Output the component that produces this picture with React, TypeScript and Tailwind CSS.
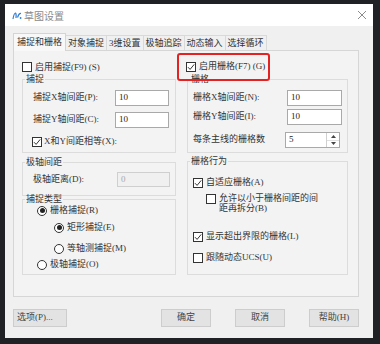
import React from 'react';

const Check = ({ checked = false }: { checked?: boolean }) => (
  <span className="w-[10px] h-[10px] border border-[#333] bg-white flex items-center justify-center shrink-0">
    {checked && (
      <svg width="8" height="8" viewBox="0 0 8 8">
        <path d="M1 4.2 L3.1 6.4 L7.2 1.4" stroke="#333" strokeWidth="1" fill="none" />
      </svg>
    )}
  </span>
);

const Radio = ({ on = false }: { on?: boolean }) => (
  <span className="w-[10px] h-[10px] rounded-full border border-[#333] bg-white flex items-center justify-center shrink-0">
    {on && <span className="w-[5px] h-[5px] rounded-full bg-[#222]" />}
  </span>
);

const Field = ({ value, w = 'w-[54px]', disabled = false }: { value: string; w?: string; disabled?: boolean }) => (
  <div
    className={
      disabled
        ? `${w} h-[15px] ml-auto bg-[#f0f0f0] border border-[#cfcfcf] text-[#a8a8a8] pl-[3px] flex items-center text-[9px]`
        : `${w} h-[16px] ml-auto bg-white border border-[#a9a9a9] text-[#222] pl-[3px] flex items-center text-[9px]`
    }
  >
    {value}
  </div>
);

const Legend = ({ children }: { children: React.ReactNode }) => (
  <legend className="ml-[2px] px-[1px] leading-[11px] text-[9px] text-[#333]">{children}</legend>
);

const tabs = ['对象捕捉', '3维设置', '极轴追踪', '动态输入', '选择循环'];

export default function App() {
  return (
    <div className="w-[380px] h-[344px] bg-[#1f2124] pt-[4px] pl-[5px] font-['Liberation_Serif','Noto_Sans_CJK_SC',serif] text-[9px] text-[#333]">
      <div className="w-[368px] h-[334px] bg-[#f0f0f0] flex flex-col">
        {/* title bar */}
        <div className="h-[22px] bg-white flex items-center pl-[7px] pr-[6px]">
          <svg width="10" height="10" viewBox="0 0 10 10">
            <path d="M1 9 Q2 3 3.5 3 Q4.5 4 4 8" stroke="#2f7fd8" strokeWidth="1.2" fill="none" />
            <path d="M5.5 7.5 Q7 3 9 3.5" stroke="#2f7fd8" strokeWidth="1.2" fill="none" />
            <circle cx="8.6" cy="8" r="0.9" fill="#2f7fd8" />
          </svg>
          <span className="ml-[2px] text-[10px] text-[#8a8a8a] font-['Noto_Sans_CJK_SC',sans-serif]">草图设置</span>
          <svg className="ml-auto" width="10" height="10" viewBox="0 0 10 10">
            <path d="M1 1 L9 9 M9 1 L1 9" stroke="#8c8c8c" strokeWidth="1" />
          </svg>
        </div>

        <div className="pl-[8px] pt-[7px]">
          {/* tabs */}
          <div className="flex items-end h-[17px]">
            <div className="relative z-10 h-[18px] mb-[-1px] pl-[3px] pr-[3px] bg-[#f8f8f8] border border-b-0 border-[#d4d4d4] flex items-center leading-[11px]">
              捕捉和栅格
            </div>
            {tabs.map((t) => (
              <div key={t} className="h-[15px] px-[2px] border border-l-0 border-b-0 border-[#d9d9d9] bg-[#f0f0f0] flex items-center leading-[11px]">
                {t}
              </div>
            ))}
          </div>

          {/* panel */}
          <div className="w-[346px] h-[247px] border border-[#d6d6d6] bg-[#f3f3f3] flex pl-[8px]">
            {/* left column */}
            <div className="w-[154px] flex flex-col">
              <div className="mt-[10px] h-[12px] flex items-center gap-[3px]">
                <Check />
                <span className="leading-[11px]">启用捕捉(F9) (S)</span>
              </div>
              <fieldset className="mt-[1px] border border-[#dcdcdc] pb-[4px]">
                <Legend>捕捉</Legend>
                <div className="mt-[5px] h-[16px] flex items-center pl-[10px] pr-[6px]">
                  <span>捕捉X轴间距(P):</span>
                  <Field value="10" />
                </div>
                <div className="mt-[6px] h-[16px] flex items-center pl-[10px] pr-[6px]">
                  <span>捕捉Y轴间距(C):</span>
                  <Field value="10" />
                </div>
                <div className="mt-[8px] h-[12px] flex items-center pl-[9px] gap-[2px]">
                  <Check checked />
                  <span>X和Y间距相等(X):</span>
                </div>
              </fieldset>
              <fieldset className="mt-[4px] border border-[#dcdcdc] pb-[8px]">
                <Legend>极轴间距</Legend>
                <div className="mt-[4px] h-[15px] flex items-center pl-[10px] pr-[5px]">
                  <span>极轴距离(D):</span>
                  <Field value="0" w="w-[53px]" disabled />
                </div>
              </fieldset>
              <fieldset className="mt-[-2px] border border-[#dcdcdc] pb-[4px]">
                <Legend>捕捉类型</Legend>
                <div className="h-[11px] flex items-center pl-[14px] gap-[3px]">
                  <Radio on />
                  <span>栅格捕捉(R)</span>
                </div>
                <div className="mt-[6px] h-[11px] flex items-center pl-[31px] gap-[3px]">
                  <Radio on />
                  <span>矩形捕捉(E)</span>
                </div>
                <div className="mt-[10px] h-[11px] flex items-center pl-[31px] gap-[3px]">
                  <Radio />
                  <span>等轴测捕捉(M)</span>
                </div>
                <div className="mt-[5px] h-[11px] flex items-center pl-[14px] gap-[3px]">
                  <Radio />
                  <span>极轴捕捉(O)</span>
                </div>
              </fieldset>
            </div>

            {/* right column */}
            <div className="relative w-[161px] ml-[11px] flex flex-col">
              <div className="absolute left-[-10px] top-[2px] w-[93px] h-[28px] border-2 border-[#e52222] rounded-[3px]" />
              <div className="mt-[10px] ml-[-1px] h-[12px] flex items-center gap-[3px]">
                <Check checked />
                <span>启用栅格(F7) (G)</span>
              </div>
              <fieldset className="mt-[1px] border border-[#dcdcdc] pb-[4px]">
                <Legend>栅格</Legend>
                <div className="mt-[5px] h-[16px] flex items-center pl-[5px] pr-[5px]">
                  <span>栅格X轴间距(N):</span>
                  <Field value="10" w="w-[55px]" />
                </div>
                <div className="mt-[3px] h-[16px] flex items-center pl-[5px] pr-[5px]">
                  <span>栅格Y轴间距(I):</span>
                  <Field value="10" w="w-[55px]" />
                </div>
                <div className="mt-[7px] h-[16px] flex items-center pl-[5px] pr-[7px]">
                  <span>每条主线的栅格数</span>
                  <div className="ml-auto w-[55px] h-[16px] bg-white border border-[#a9a9a9] flex">
                    <span className="flex-1 pl-[3px] flex items-center text-[#222]">5</span>
                    <div className="w-[13px] border-l border-[#d0d0d0] flex flex-col">
                      <div className="flex-1 flex items-center justify-center">
                        <svg width="5" height="3" viewBox="0 0 5 3"><path d="M0 3 L2.5 0 L5 3Z" fill="#444" /></svg>
                      </div>
                      <div className="flex-1 flex items-center justify-center border-t border-[#e0e0e0]">
                        <svg width="5" height="3" viewBox="0 0 5 3"><path d="M0 0 L2.5 3 L5 0Z" fill="#444" /></svg>
                      </div>
                    </div>
                  </div>
                </div>
              </fieldset>
              <fieldset className="mt-[3px] border border-[#dcdcdc] pb-[10px]">
                <Legend>栅格行为</Legend>
                <div className="mt-[10px] h-[12px] flex items-center pl-[5px] gap-[3px]">
                  <Check checked />
                  <span>自适应栅格(A)</span>
                </div>
                <div className="mt-[4px] flex items-start pl-[18px] gap-[3px]">
                  <span className="mt-[1px]"><Check /></span>
                  <span className="leading-[10px]">
                    允许以小于栅格间距的间
                    <br />
                    距再拆分(B)
                  </span>
                </div>
                <div className="mt-[18px] h-[12px] flex items-center pl-[5px] gap-[3px]">
                  <Check checked />
                  <span>显示超出界限的栅格(L)</span>
                </div>
                <div className="mt-[9px] h-[12px] flex items-center pl-[5px] gap-[3px]">
                  <Check />
                  <span>跟随动态UCS(U)</span>
                </div>
              </fieldset>
            </div>
          </div>

          {/* buttons */}
          <div className="w-[346px] mt-[12px] flex">
            <button className="w-[54px] h-[18px] bg-[#e3e3e3] border border-[#cdcdcd] text-left pl-[3px] text-[#444]">选项(P)...</button>
            <div className="ml-auto flex gap-[24px]">
              <button className="w-[50px] h-[18px] bg-[#e3e3e3] border border-[#cdcdcd] text-[#444]">确定</button>
              <button className="w-[50px] h-[18px] bg-[#e3e3e3] border border-[#cdcdcd] text-[#444]">取消</button>
              <button className="w-[50px] h-[18px] bg-[#e3e3e3] border border-[#cdcdcd] text-[#444]">帮助(H)</button>
            </div>
          </div>
        </div>
      </div>
    </div>
  );
}
